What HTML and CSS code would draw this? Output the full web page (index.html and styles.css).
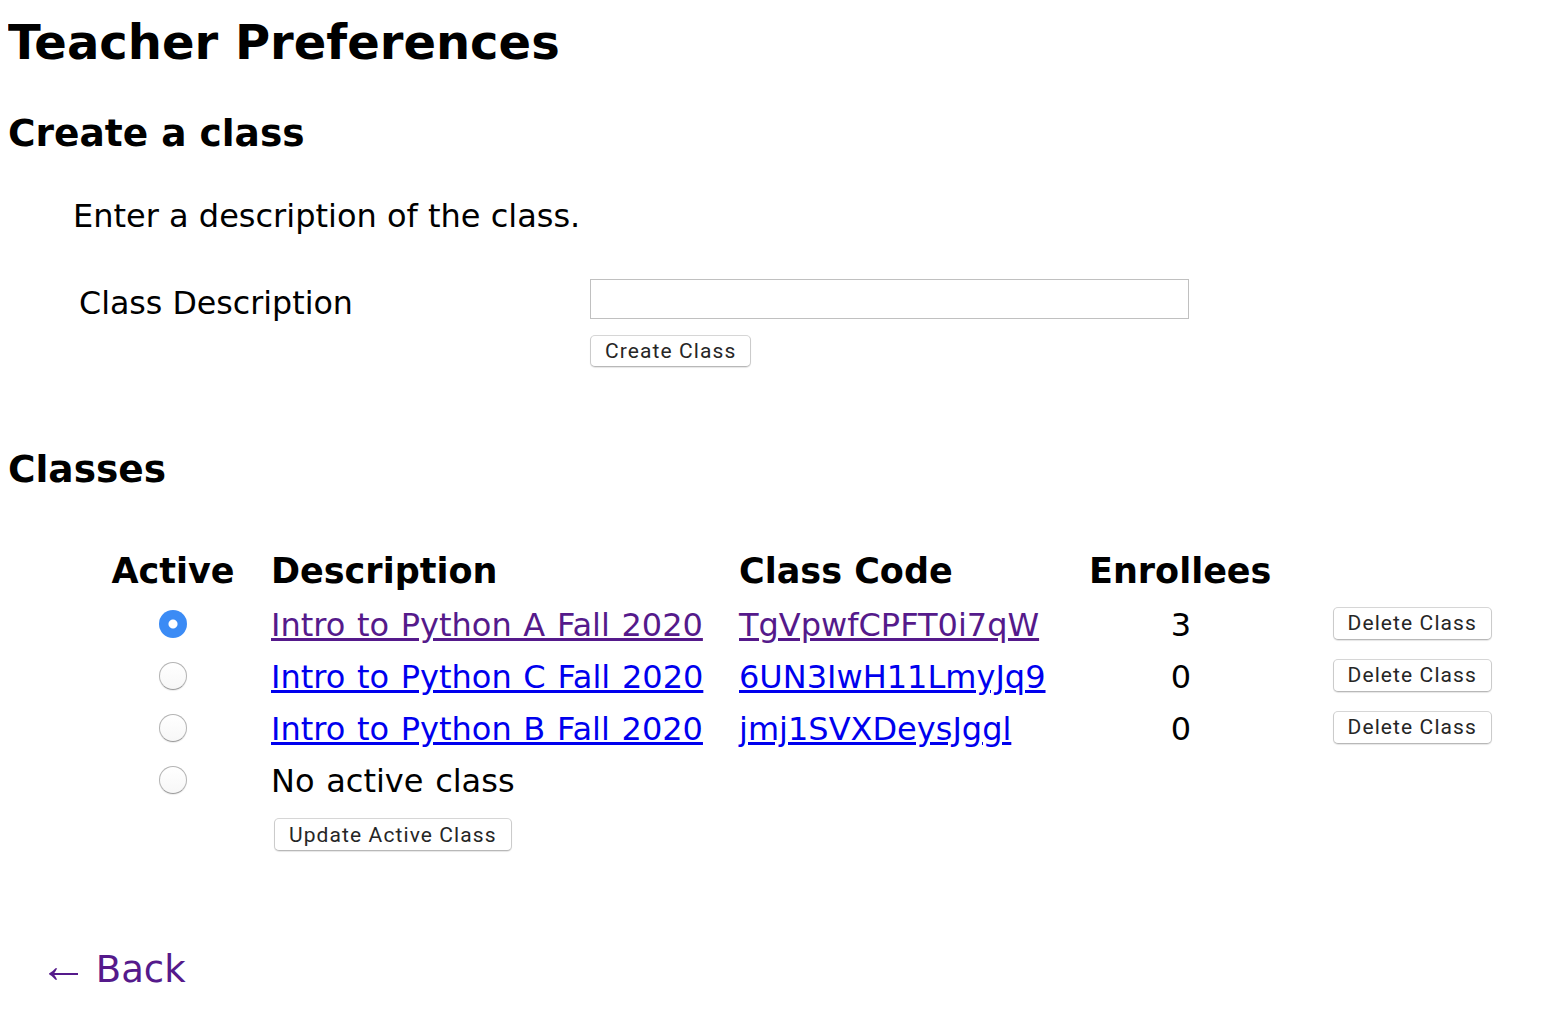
FILE: index.html
```html
<!DOCTYPE html>
<html lang="en">
<head>
<meta charset="utf-8">
<title>Teacher Preferences</title>
<link rel="stylesheet" href="styles.css">
</head>
<body>
  <h1 class="page-title">Teacher Preferences</h1>

  <h2 class="section-title create-title">Create a class</h2>
  <p class="intro">Enter a description of the class.</p>

  <form class="create-form">
    <label class="field-label" for="class-desc">Class Description</label>
    <input id="class-desc" class="text-input" type="text">
    <span class="spacer"></span>
    <button type="button" class="btn create-btn">Create Class</button>
  </form>

  <h2 class="section-title classes-title">Classes</h2>

  <div class="class-grid">
    <div class="th th-center">Active</div>
    <div class="th">Description</div>
    <div class="th">Class Code</div>
    <div class="th">Enrollees</div>
    <div class="th"></div>

    <div class="cell cell-center"><input class="radio" type="radio" name="active" checked></div>
    <div class="cell"><a class="link visited" href="#">Intro to Python A Fall 2020</a></div>
    <div class="cell"><a class="link visited" href="#">TgVpwfCPFT0i7qW</a></div>
    <div class="cell cell-center">3</div>
    <div class="cell cell-end"><button type="button" class="btn delete-btn">Delete Class</button></div>

    <div class="cell cell-center"><input class="radio" type="radio" name="active"></div>
    <div class="cell"><a class="link" href="#">Intro to Python C Fall 2020</a></div>
    <div class="cell"><a class="link" href="#">6UN3IwH11LmyJq9</a></div>
    <div class="cell cell-center">0</div>
    <div class="cell cell-end"><button type="button" class="btn delete-btn">Delete Class</button></div>

    <div class="cell cell-center"><input class="radio" type="radio" name="active"></div>
    <div class="cell"><a class="link" href="#">Intro to Python B Fall 2020</a></div>
    <div class="cell"><a class="link" href="#">jmj1SVXDeysJggl</a></div>
    <div class="cell cell-center">0</div>
    <div class="cell cell-end"><button type="button" class="btn delete-btn">Delete Class</button></div>

    <div class="cell cell-center"><input class="radio" type="radio" name="active"></div>
    <div class="cell">No active class</div>
    <div class="cell"></div>
    <div class="cell"></div>
    <div class="cell"></div>

    <div class="update-row"><button type="button" class="btn">Update Active Class</button></div>
  </div>

  <a class="back-link" href="#"><span class="arrow">←</span> Back</a>
</body>
</html>
```

FILE: styles.css
```css
html, body {
  background: #ffffff;
}

body {
  margin: 0 8px;
  padding: 0;
  color: #000;
  font-family: "DejaVu Sans", Verdana, sans-serif;
  font-size: 32px;
}

.page-title {
  margin: 14px 0 0;
  font-size: 48px;
  line-height: 56px;
  font-weight: bold;
}

.section-title {
  margin: 0;
  font-size: 37.5px;
  line-height: 44px;
  font-weight: bold;
}

.create-title {
  margin-top: 41px;
}

.intro {
  margin: 43px 0 0 65px;
  font-size: 32px;
  line-height: 36px;
}

.create-form {
  margin: 45px 0 0 71px;
  display: grid;
  grid-template-columns: 511px 600px;
  grid-template-rows: 40px 32px;
  row-gap: 16px;
}

.field-label {
  font-size: 31.7px;
  line-height: 36px;
  padding-top: 6px;
  white-space: nowrap;
}

.text-input {
  box-sizing: border-box;
  width: 599px;
  height: 40px;
  margin: 0;
  border: 1px solid #c0c0c0;
  border-radius: 0;
  background: #fff;
  padding: 0 6px;
  font-size: 20px;
  outline: none;
}

.create-btn {
  justify-self: start;
  margin-left: 2px;
}

.btn {
  box-sizing: border-box;
  height: 32px;
  margin: 0;
  padding: 0 14px;
  background: #ffffff;
  border: 1px solid #cbcbcb;
  border-top-color: #d6d6d6;
  border-bottom-color: #b8b8b8;
  border-radius: 5px;
  box-shadow: 0 1px 1px rgba(0, 0, 0, 0.10);
  color: #262626;
  font-family: Roboto, "Liberation Sans", sans-serif;
  font-size: 21px;
  letter-spacing: 1.1px;
  line-height: 30px;
  white-space: nowrap;
  cursor: pointer;
}

.delete-btn {
  height: 33px;
  margin-bottom: 4px;
}

.classes-title {
  margin-top: 80px;
}

.class-grid {
  margin: 60px 0 0 102px;
  display: grid;
  grid-template-columns: 126px 433px 315px 184px 184px;
  grid-template-rows: 48px repeat(4, 52px) auto;
  column-gap: 35px;
}

.th {
  font-size: 35px;
  line-height: 40px;
  font-weight: bold;
  white-space: nowrap;
}

.th-center {
  text-align: center;
}

.cell {
  display: flex;
  align-items: center;
  font-size: 32px;
  line-height: 36px;
  word-spacing: 1.5px;
  white-space: nowrap;
}

.cell-center {
  justify-content: center;
}

.cell-end {
  justify-content: flex-end;
}

.link {
  color: #0000ee;
  text-decoration: underline;
}

.link.visited {
  color: #551a8b;
}

.radio {
  appearance: none;
  -webkit-appearance: none;
  box-sizing: border-box;
  width: 28px;
  height: 28px;
  margin: 0 0 3px;
  border-radius: 50%;
  border: 1px solid #b4b4b4;
  border-bottom-color: #9c9c9c;
  background: linear-gradient(#ffffff, #f7f7f7);
  box-shadow: 0 1px 1px rgba(0, 0, 0, 0.08);
}

.radio:checked {
  border: none;
  background: radial-gradient(circle, #ffffff 0 4px, #3b8bf5 5px);
  box-shadow: none;
}

.update-row {
  grid-column: 2;
  display: flex;
  margin-top: 11px;
  padding-left: 3px;
}

.update-row .btn {
  height: 33px;
}

.back-link {
  display: inline-block;
  margin: 92px 0 0 31px;
  font-size: 37px;
  line-height: 44px;
  color: #551a8b;
  text-decoration: none;
  word-spacing: -4px;
}

.arrow {
  font-family: "Liberation Sans", "DejaVu Sans", sans-serif;
  font-size: 49px;
  line-height: 44px;
}
```
